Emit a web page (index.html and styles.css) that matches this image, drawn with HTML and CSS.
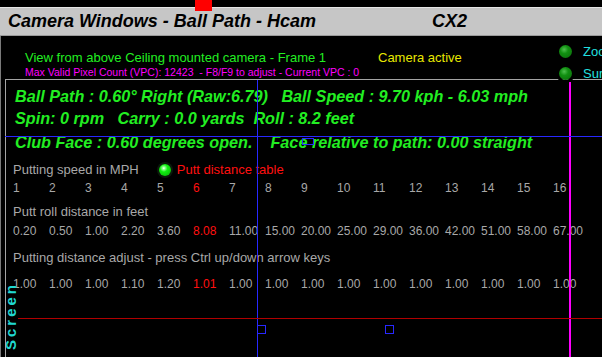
FILE: index.html
```html
<!DOCTYPE html>
<html lang="en">
<head>
<meta charset="UTF-8">
<title>Camera Windows - Ball Path - Hcam</title>
<link rel="stylesheet" href="styles.css">
</head>
<body>
<div class="app">
    <div class="top-strip"></div>
    <div class="titlebar">
        <span class="title">Camera Windows - Ball Path - Hcam</span>
        <span class="cam">CX2</span>
    </div>
    <div class="window">
        <div class="frame-edge"></div>
        <div class="view">
            <div class="view-head">
                <div class="head-left">
                    <div class="head-row">
                        <span class="info">View from above Ceiling mounted camera - Frame 1</span>
                        <span class="active">Camera active</span>
                    </div>
                    <div class="vpc">Max Valid Pixel Count (VPC): 12423&nbsp; - F8/F9 to adjust - Current VPC : 0</div>
                </div>
                <div class="toggles">
                    <div class="toggle"><span class="led dim"></span><span>Zoom</span></div>
                    <div class="toggle"><span class="led dim"></span><span>Sum</span></div>
                </div>
            </div>

            <div class="panel">
                <div class="stats">
                    <div>Ball Path : 0.60° Right (Raw:6.79)&nbsp;&nbsp; Ball Speed : 9.70 kph - 6.03 mph</div>
                    <div>Spin: 0 rpm &nbsp; Carry : 0.0 yards &nbsp;Roll : 8.2 feet</div>
                    <div class="face">Club Face : 0.60 degrees open. &nbsp;&nbsp; Face relative to path: 0.00 straight</div>
                </div>

                <div class="putt">
                    <div class="putt-head">
                        <span>Putting speed in MPH</span>
                        <span class="led bright"></span>
                        <span class="hot">Putt distance table</span>
                    </div>
                    <div class="cells" id="speedRow"></div>

                    <div class="putt-head roll">Putt roll distance in feet</div>
                    <div class="cells" id="rollRow"></div>

                    <div class="putt-head adjust">Putting distance adjust - press Ctrl up/down arrow keys</div>
                    <div class="cells adj" id="adjustRow"></div>
                </div>
            </div>

            <!-- overlay guides drawn on the camera view -->
            <div class="guide v-blue"></div>
            <div class="guide v-pink"></div>
            <div class="guide h-blue"></div>
            <div class="guide h-red"></div>
            <div class="marker m1"></div>
            <div class="marker m2"></div>
            <div class="marker m3"></div>
            <div class="screen-label">Screen</div>
        </div>
    </div>
    <div class="red-tab"></div>
</div>

<script>
// putt table, the selected column is drawn in red
const speeds = ['1','2','3','4','5','6','7','8','9','10','11','12','13','14','15','16'];
const rolls = ['0.20','0.50','1.00','2.20','3.60','8.08','11.00','15.00','20.00','25.00','29.00','36.00','42.00','51.00','58.00','67.00'];
const adjust = ['1.00','1.00','1.00','1.10','1.20','1.01','1.00','1.00','1.00','1.00','1.00','1.00','1.00','1.00','1.00','1.00'];
const selected = 5;

function fillRow(id, values) {
    const row = document.getElementById(id);
    values.forEach((v, i) => {
        const span = document.createElement('span');
        span.textContent = v;
        if (i === selected) span.className = 'hot';
        row.appendChild(span);
    });
}

fillRow('speedRow', speeds);
fillRow('rollRow', rolls);
fillRow('adjustRow', adjust);
</script>
</body>
</html>
```

FILE: styles.css
```css
body {
    margin: 0;
    padding: 0;
    background-color: #000;
    font-family: "Liberation Sans", Arial, sans-serif;
    overflow: hidden;
}
.app {
    position: relative;
    width: 602px;
    height: 357px;
    overflow: hidden;
}
.top-strip {
    height: 7px;
    background-color: #000;
}
.titlebar {
    height: 27px;
    background-color: #c6c6c6;
    border-top: 1px solid #e4e4e4;
    border-bottom: 1px solid #9a9a9a;
    display: flex;
    align-items: center;
    font-weight: bold;
    font-style: italic;
    font-size: 18px;
    color: #000;
}
.title {
    padding-left: 8px;
    width: 424px;
}
.window {
    display: flex;
    height: 321px;
}
.frame-edge {
    width: 3px;
    background-color: #c6c6c6;
    border-right: 1px solid #7a7a7a;
}
.view {
    position: relative;
    flex: 1;
    background-color: #000;
}
.view-head {
    display: flex;
    height: 43px;
}
.head-left {
    width: 558px;
    padding: 14px 0 0 24px;
    box-sizing: border-box;
}
.head-row {
    display: grid;
    grid-template-columns: 353px auto;
    font-size: 13px;
    line-height: 15px;
}
.info {
    color: #22ee22;
}
.active {
    color: #e8e800;
}
.vpc {
    color: #ff00ff;
    font-size: 10.5px;
    line-height: 12px;
    margin-top: 1px;
    white-space: nowrap;
}
.toggles {
    position: relative;
    z-index: 2;
    padding-top: 9px;
    display: flex;
    flex-direction: column;
    gap: 9px;
}
.toggle {
    display: flex;
    align-items: center;
    gap: 11px;
    color: #22e0e0;
    font-size: 13px;
    height: 13px;
}
.led {
    display: inline-block;
    border-radius: 50%;
    box-shadow: 0 0 0 3px #000;
}
.led.dim {
    width: 13px;
    height: 13px;
    background: radial-gradient(circle at 40% 35%, #4fc04f 0, #119011 35%, #0a6a0a 100%);
}
.led.bright {
    width: 12px;
    height: 12px;
    margin: 0 6px 0 20px;
    background: radial-gradient(circle at 40% 35%, #ffffff 0, #9aff9a 12%, #10f010 35%, #0aa80a 100%);
    box-shadow: 0 0 0 2px #0c1a0c;
}
.panel {
    margin-left: 4px;
    border-top: 1px solid #a4a4a4;
    border-left: 1px solid #a4a4a4;
    padding: 5px 0 0 7px;
    height: 300px;
}
.stats {
    color: #22ee22;
    font-weight: bold;
    font-style: italic;
    font-size: 16.2px;
    line-height: 22px;
    padding-left: 2px;
    white-space: nowrap;
}
.stats .face {
    margin-top: 2px;
}
.putt {
    color: #a8a8a8;
    font-size: 13px;
    line-height: 15px;
    margin-top: 9px;
}
.putt-head {
    display: flex;
    align-items: center;
    white-space: nowrap;
}
.putt-head.roll {
    margin-top: 8px;
}
.putt-head.adjust {
    margin-top: 11px;
}
.cells {
    display: grid;
    grid-template-columns: repeat(16, 36px);
    font-size: 12px;
    margin-top: 4px;
    white-space: nowrap;
}
#rollRow {
    margin-top: 5px;
}
.cells.adj {
    margin-top: 12px;
}
.hot {
    color: #ff1010;
}
.guide {
    position: absolute;
}
.v-blue {
    left: 256px;
    top: 44px;
    bottom: 0;
    width: 1px;
    background-color: #2828ff;
}
.v-pink {
    left: 568px;
    top: 46px;
    bottom: 0;
    width: 2px;
    background-color: #ff00ff;
}
.h-blue {
    left: 4px;
    right: 0;
    top: 100px;
    height: 1px;
    background-color: #2828ff;
}
.h-red {
    left: 17px;
    right: 0;
    top: 282px;
    height: 1px;
    background-color: #b00000;
}
.marker {
    position: absolute;
    width: 7px;
    height: 7px;
    border: 1px solid #2828ff;
}
.m1 {
    left: 256px;
    top: 289px;
}
.m2 {
    left: 384px;
    top: 289px;
}
.m3 {
    left: 301px;
    top: 102px;
    width: 10px;
    height: 5px;
}
.screen-label {
    position: absolute;
    left: 3px;
    top: 246px;
    writing-mode: vertical-rl;
    transform: rotate(180deg);
    color: #20d8d0;
    font-weight: bold;
    font-size: 15px;
    letter-spacing: 3px;
    line-height: 14px;
}
.red-tab {
    position: absolute;
    left: 195px;
    top: 0;
    width: 17px;
    height: 11px;
    background-color: #ff0000;
}
```
